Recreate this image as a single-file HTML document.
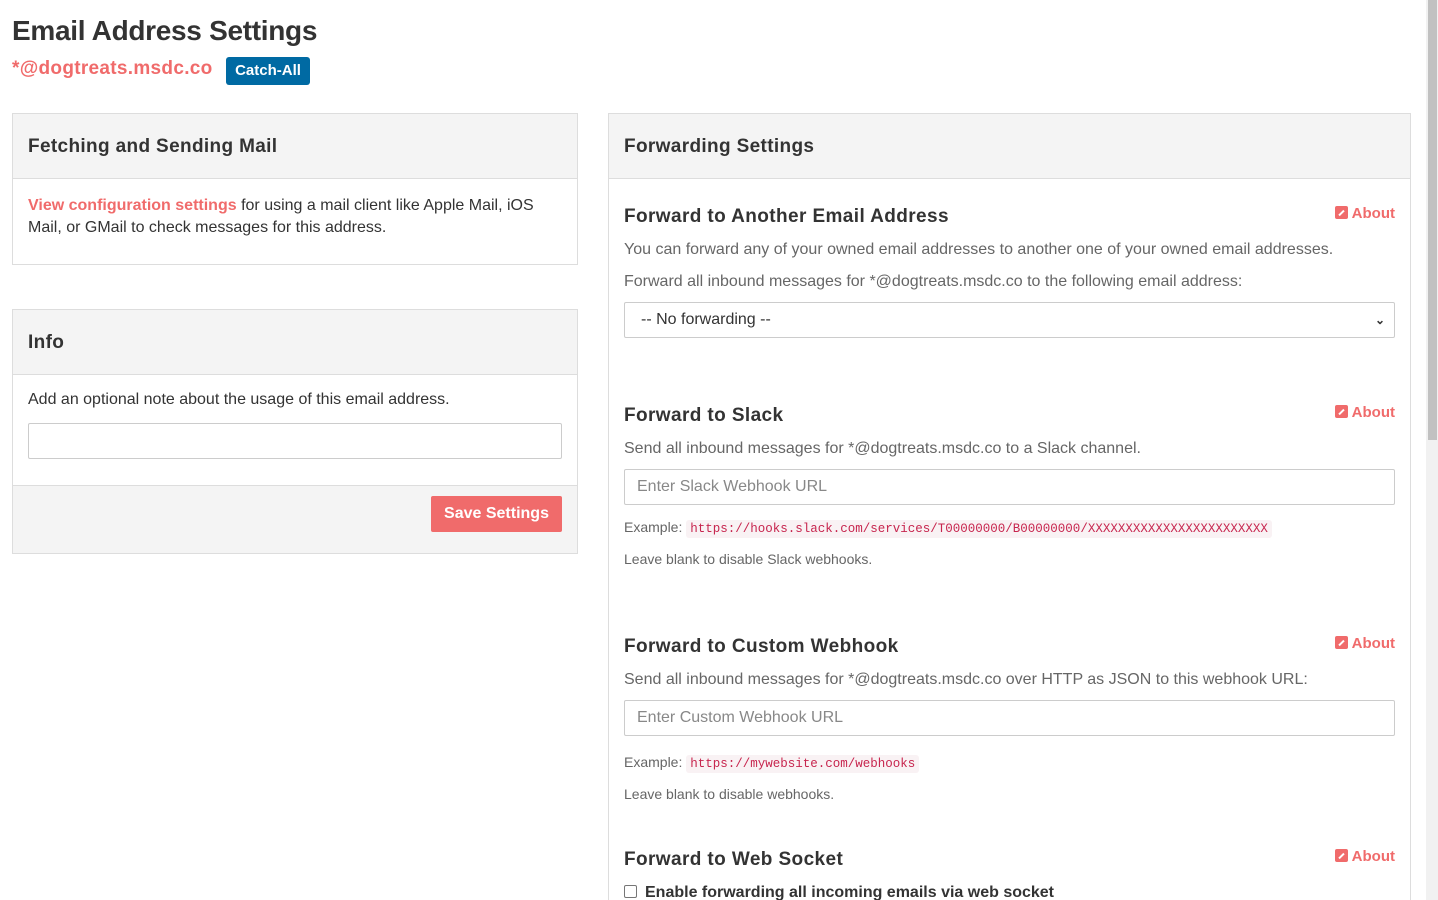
<!DOCTYPE html>
<html><head><style>
*{box-sizing:border-box}
html,body{margin:0;width:1438px;height:900px;overflow:hidden}
body{background:#fff;font-family:"Liberation Sans",sans-serif;color:#333;position:relative}
.a{position:absolute}
h1{position:absolute;left:12px;top:15px;margin:0;font-size:28px;font-weight:bold;color:#333;letter-spacing:-.3px}
.addr{left:12px;top:58px;font-size:19px;font-weight:bold;color:#f06b6b;letter-spacing:.3px}
.badge{left:226px;top:57px;width:84px;height:28px;background:#006aa3;color:#fff;font-weight:bold;font-size:15px;border-radius:3px;text-align:center;line-height:27px}
.panel{position:absolute;border:1px solid #ddd;background:#fff}
.ph{background:#f4f4f4;border-bottom:1px solid #ddd;height:65px;padding:0 15px;font-weight:bold;font-size:19px;line-height:65px;color:#333;letter-spacing:.35px}
.t{font-size:16px;color:#333;position:absolute}
.g{color:#666}
.h3{position:absolute;font-weight:bold;font-size:19px;color:#333;letter-spacing:.4px}
.about{position:absolute;right:15px;font-weight:bold;font-size:15px;color:#f06b6b}
.about i{display:inline-block;width:13px;height:13px;background:#f06b6b;border-radius:2px;vertical-align:-1px;margin-right:4px;position:relative}
.about i:after{content:"";position:absolute;left:3px;top:6px;width:7px;height:2px;background:#fff;transform:rotate(-45deg)}
.inp{position:absolute;border:1px solid #ccc;border-radius:2px;height:36px;font-size:16px;color:#888;padding-left:12px;line-height:34px}
.small{position:absolute;font-size:14px;color:#666}
code{font-family:"Liberation Mono",monospace;font-size:12.5px;color:#c7254e;background:#f9f2f4;padding:2px 4px;border-radius:3px}
</style></head><body>
<h1>Email Address Settings</h1>
<div class="a addr">*@dogtreats.msdc.co</div>
<div class="a badge">Catch-All</div>

<div class="panel" style="left:12px;top:113px;width:566px;height:152px">
<div class="ph">Fetching and Sending Mail</div>
<div class="t" style="left:15px;top:81px;width:530px;line-height:22px"><span style="color:#f06b6b;font-weight:bold">View configuration settings</span> for using a mail client like Apple Mail, iOS Mail, or GMail to check messages for this address.</div>
</div>

<div class="panel" style="left:12px;top:309px;width:566px;height:245px">
<div class="ph">Info</div>
<div class="t" style="left:15px;top:81px">Add an optional note about the usage of this email address.</div>
<div class="inp" style="left:15px;top:113px;width:534px"></div>
<div style="position:absolute;left:0;right:0;top:175px;bottom:0;background:#f4f4f4;border-top:1px solid #ddd"></div>
<div style="position:absolute;left:418px;top:186px;width:131px;height:36px;background:#f06b6b;color:#fff;font-weight:bold;font-size:16px;text-align:center;line-height:36px;border-radius:2px">Save Settings</div>
</div>

<div class="panel" style="left:608px;top:113px;width:803px;height:800px">
<div class="ph">Forwarding Settings</div>
<div class="h3" style="left:15px;top:92px">Forward to Another Email Address</div>
<div class="about" style="top:91px"><i></i>About</div>
<div class="t g" style="left:15px;top:127px">You can forward any of your owned email addresses to another one of your owned email addresses.</div>
<div class="t g" style="left:15px;top:159px">Forward all inbound messages for *@dogtreats.msdc.co to the following email address:</div>
<div class="inp" style="left:15px;top:188px;width:771px;color:#333;padding-left:16px">-- No forwarding --<span style="position:absolute;right:9px;top:0;font-size:12px;font-weight:bold">&#8964;</span></div>

<div class="h3" style="left:15px;top:291px">Forward to Slack</div>
<div class="about" style="top:290px"><i></i>About</div>
<div class="t g" style="left:15px;top:326px">Send all inbound messages for *@dogtreats.msdc.co to a Slack channel.</div>
<div class="inp" style="left:15px;top:355px;width:771px">Enter Slack Webhook URL</div>
<div class="small" style="left:15px;top:405px">Example: <code>https://hooks.slack.com/services/T00000000/B00000000/XXXXXXXXXXXXXXXXXXXXXXXX</code></div>
<div class="small" style="left:15px;top:437px">Leave blank to disable Slack webhooks.</div>

<div class="h3" style="left:15px;top:522px">Forward to Custom Webhook</div>
<div class="about" style="top:521px"><i></i>About</div>
<div class="t g" style="left:15px;top:557px">Send all inbound messages for *@dogtreats.msdc.co over HTTP as JSON to this webhook URL:</div>
<div class="inp" style="left:15px;top:586px;width:771px">Enter Custom Webhook URL</div>
<div class="small" style="left:15px;top:640px">Example: <code>https://mywebsite.com/webhooks</code></div>
<div class="small" style="left:15px;top:672px">Leave blank to disable webhooks.</div>

<div class="h3" style="left:15px;top:735px">Forward to Web Socket</div>
<div class="about" style="top:734px"><i></i>About</div>
<div class="t" style="left:15px;top:770px;font-weight:bold"><span style="display:inline-block;width:13px;height:13px;border:1px solid #767676;border-radius:2px;vertical-align:-1px;margin-right:8px"></span>Enable forwarding all incoming emails via web socket</div>
</div>

<div class="a" style="left:1426px;top:0;width:12px;height:900px;background:#f1f1f1"></div>
<div class="a" style="left:1428px;top:0;width:9px;height:440px;background:#c1c1c1"></div>
</body></html>
